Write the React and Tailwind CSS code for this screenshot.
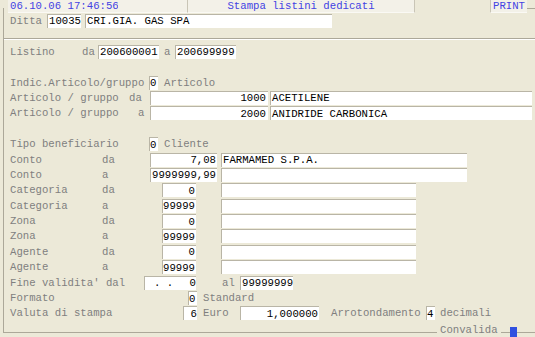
import React from "react";

// grey caption text of the legacy form
const Label = ({ className = "", children }) => (
  <span className={`shrink-0 whitespace-pre text-[#7f7f7f] ${className}`}>{children}</span>
);

// white sunken input box
const Field = ({ className = "", children }) => (
  <span
    className={`h-[14px] shrink-0 flex items-center overflow-hidden whitespace-pre bg-white text-black border-t border-l border-[#b9b5a6] ${className}`}
  >
    {children}
  </span>
);

const Row = ({ className = "", children }) => (
  <div className={`flex items-center h-[15.4px] pl-[6px] ${className}`}>{children}</div>
);

// Categoria / Zona / Agente rows share the same shape
const RangeRow = ({ label, kw, value }) => (
  <Row>
    <Label className="w-[92px]">{label}</Label>
    <Label className="w-[60px]">{kw}</Label>
    <Field className="w-[34px] justify-end pr-[1px]">{value}</Field>
    <Field className="ml-[25px] w-[195px]" />
  </Row>
);

export default function App() {
  return (
    <div className="w-[535px] h-[337px] overflow-hidden bg-[#ece9d8] pt-[8px] pl-[3px] font-['Liberation_Mono',monospace] text-[10.67px] leading-[12px]">
      <div className="h-[325px] w-[545px] border-l border-t border-b border-[#aca899]">
        {/* top status bar */}
        <div className="-mt-[9px] h-[13.3px] w-[523px] flex bg-[#ece9d8] text-[#4343e3] whitespace-nowrap">
          <div className="w-[4px] shrink-0" />
          <div className="w-[110px] shrink-0 flex items-center pl-[2px] bg-[#f3f1e8] border-b border-[#faf9f4]">
            06.10.06 17:46:56
          </div>
          <div className="w-[70px] shrink-0 bg-[#f3f1e8] border-r border-[#c9c5b6] border-b border-b-[#faf9f4]" />
          <div className="w-[227px] shrink-0 flex items-center justify-center bg-[#f3f1e8] border-r border-[#c9c5b6] border-b border-b-[#faf9f4]">
            Stampa listini dedicati
          </div>
          <div className="w-[75px] shrink-0" />
          <div className="w-[37px] shrink-0 flex items-center pl-[2px] bg-[#f3f1e8] border-l border-[#c9c5b6] border-b border-b-[#faf9f4]">
            PRINT
          </div>
        </div>

        <Row>
          <Label className="w-[37px]">Ditta</Label>
          <Field className="w-[34px] pl-[1px]">10035</Field>
          <Field className="ml-[4px] w-[247px] pl-[1px]">CRI.GIA. GAS SPA</Field>
        </Row>

        <div className="h-[15.4px] pt-[9px]">
          <div className="border-t border-[#aca899] border-b border-b-white" />
        </div>

        <Row>
          <Label className="w-[72px]">Listino</Label>
          <Label className="w-[16px]">da</Label>
          <Field className="w-[61px] pl-[1px]">200600001</Field>
          <Label className="ml-[5px] w-[11px]">a</Label>
          <Field className="w-[61px] pl-[1px]">200699999</Field>
        </Row>

        <Row />

        <Row>
          <Label className="w-[139px]">Indic.Articolo/gruppo</Label>
          <Field className="w-[9px]">0</Field>
          <Label className="ml-[6px]">Articolo</Label>
        </Row>
        <Row>
          <Label className="w-[119px]">Articolo / gruppo</Label>
          <Label className="w-[21px]">da</Label>
          <Field className="w-[118px] justify-end pr-[2px]">1000</Field>
          <Field className="ml-[2px] w-[262px] pl-[1px]">ACETILENE</Field>
        </Row>
        <Row>
          <Label className="w-[128px]">Articolo / gruppo</Label>
          <Label className="w-[12px]">a</Label>
          <Field className="w-[118px] justify-end pr-[2px]">2000</Field>
          <Field className="ml-[2px] w-[262px] pl-[1px]">ANIDRIDE CARBONICA</Field>
        </Row>

        <Row />

        <Row>
          <Label className="w-[139px]">Tipo beneficiario</Label>
          <Field className="w-[9px]">0</Field>
          <Label className="ml-[6px]">Cliente</Label>
        </Row>
        <Row>
          <Label className="w-[92px]">Conto</Label>
          <Label className="w-[48px]">da</Label>
          <Field className="w-[67px] justify-end pr-[1px]">7,08</Field>
          <Field className="ml-[4px] w-[246px] pl-[1px]">FARMAMED S.P.A.</Field>
        </Row>
        <Row>
          <Label className="w-[92px]">Conto</Label>
          <Label className="w-[48px]">a</Label>
          <Field className="w-[67px] justify-end pr-[1px]">9999999,99</Field>
          <Field className="ml-[4px] w-[246px]" />
        </Row>

        <RangeRow label="Categoria" kw="da" value="0" />
        <RangeRow label="Categoria" kw="a" value="99999" />
        <RangeRow label="Zona" kw="da" value="0" />
        <RangeRow label="Zona" kw="a" value="99999" />
        <RangeRow label="Agente" kw="da" value="0" />
        <RangeRow label="Agente" kw="a" value="99999" />

        <Row>
          <Label className="w-[134px]">Fine validita' dal</Label>
          <Field className="w-[52px] justify-between">
            <span className="pl-[9px]">. .</span>
            <span>0</span>
          </Field>
          <Label className="ml-[26px] w-[18px]">al</Label>
          <Field className="w-[53px] pl-[1px]">99999999</Field>
        </Row>
        <Row>
          <Label className="w-[178px]">Formato</Label>
          <Field className="w-[9px]">0</Field>
          <Label className="ml-[6px]">Standard</Label>
        </Row>
        <Row>
          <Label className="w-[173px]">Valuta di stampa</Label>
          <Field className="w-[14px] justify-end">6</Field>
          <Label className="ml-[6px] w-[37px]">Euro</Label>
          <Field className="w-[79px] justify-end pr-[1px]">1,000000</Field>
          <Label className="ml-[12px] w-[95px]">Arrotondamento</Label>
          <Field className="w-[9px]">4</Field>
          <Label className="ml-[5px]">decimali</Label>
        </Row>

        <Row className="pt-[3px]">
          <Label className="ml-[427px] px-[3px] bg-[#ece9d8]">Convalida</Label>
          <span className="ml-[9px] w-[7px] h-[10px] self-end bg-[#3050e0] shrink-0" />
        </Row>
      </div>
    </div>
  );
}
